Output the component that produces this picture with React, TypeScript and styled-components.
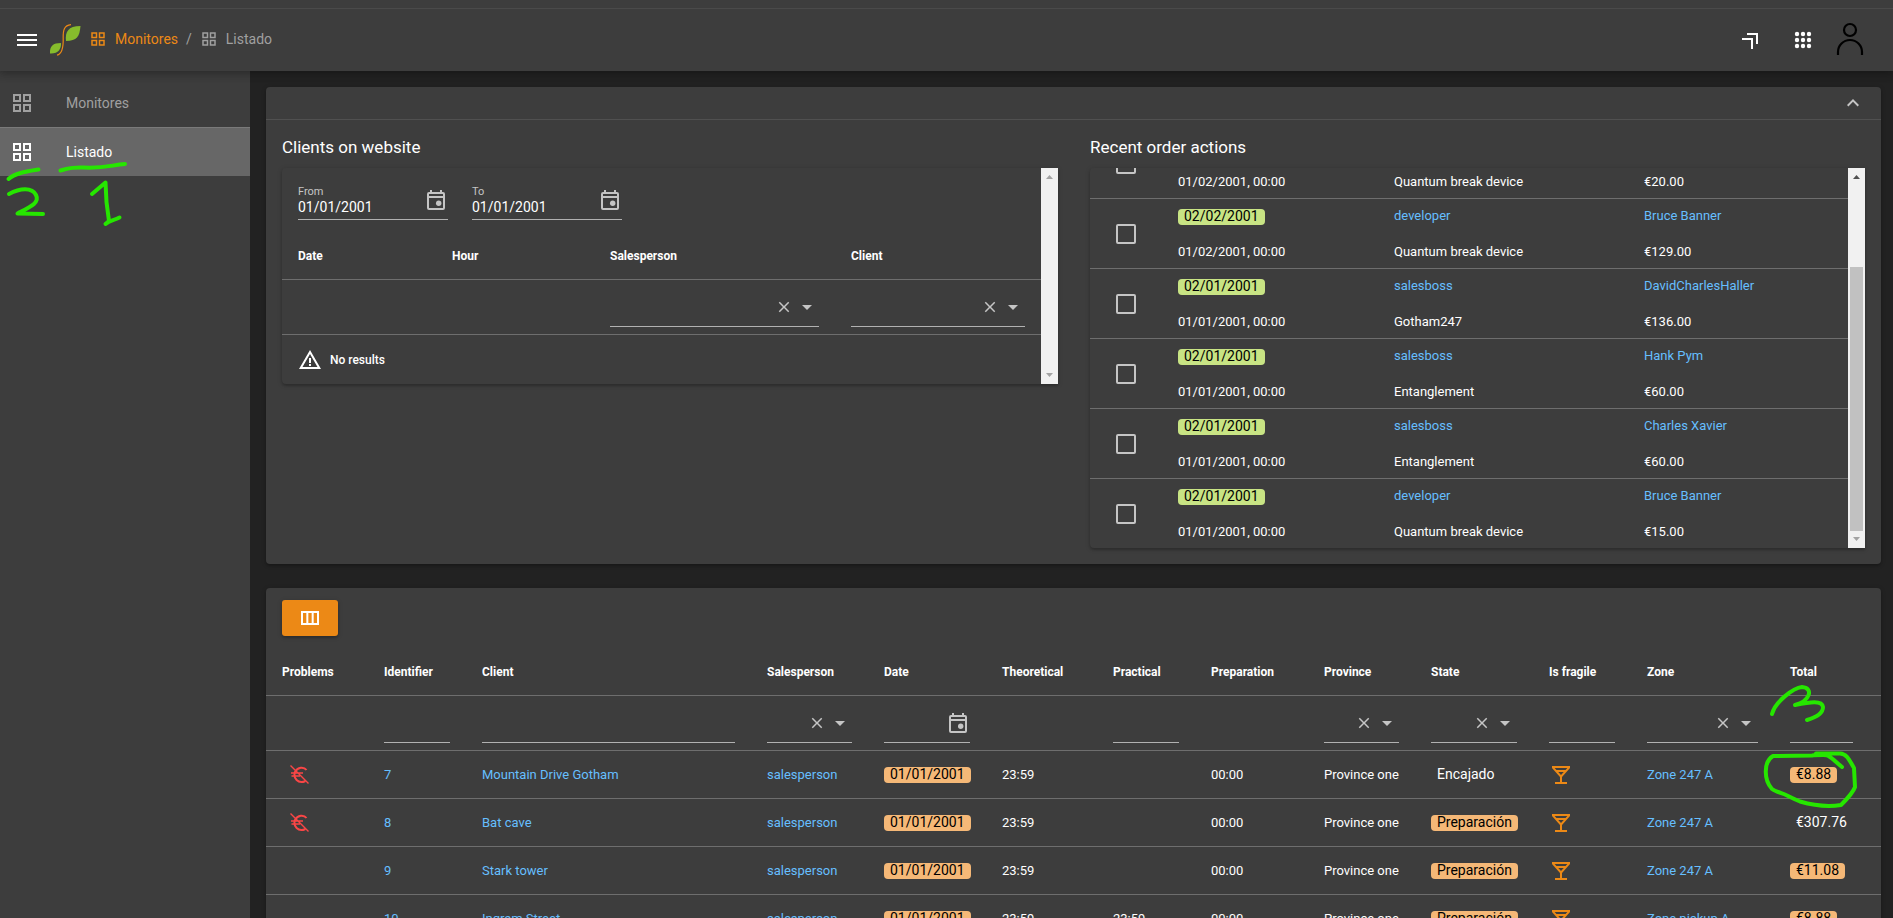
import React from "react";
import styled, { createGlobalStyle } from "styled-components";
import {
  MdArrowDropDown,
  MdClose,
  MdExpandLess,
  MdOutlineGridView,
  MdOutlineLocalBar,
  MdOutlineViewColumn,
  MdWarningAmber,
} from "react-icons/md";

const color = {
  page: "#222222",
  surface: "#3d3d3d",
  active: "#676767",
  line: "#6e6e6e",
  faintLine: "#505050",
  underline: "#b1b1b1",
  text: "#ffffff",
  muted: "#a0a0a0",
  icon: "#c5c5c5",
  link: "#66bfff",
  primary: "#ec8916",
  notice: "#f5b877",
  success: "#c8e484",
  alert: "#fa4646",
  mark: "#26e600",
};

const GlobalStyle = createGlobalStyle`
  *, *::before, *::after { box-sizing: border-box; }
  body {
    margin: 0;
    background: ${color.page};
    color: ${color.text};
    font-family: Roboto, "Liberation Sans", sans-serif;
    font-size: 14px;
    line-height: 20px;
  }
  button, input, select { font: inherit; color: inherit; }
  svg { display: block; flex: none; }
`;

const Shell = styled.div`
  position: relative;
  display: flex;
  flex-direction: column;
  height: 100vh;
  overflow: hidden;
`;

const TopBar = styled.header`
  position: relative;
  z-index: 1;
  flex: none;
  background: ${color.surface};
  padding-top: 8px;
  box-shadow: 0 0 10px 2px rgba(0, 0, 0, 0.2), 0 0 10px rgba(0, 0, 0, 0.24);
`;

const Toolbar = styled.div`
  display: flex;
  align-items: center;
  height: 63px;
  padding: 0 28px 0 16px;
  border-top: 1px solid #4a4a4a;
`;

const IconButton = styled.button`
  display: flex;
  padding: 0;
  border: 0;
  background: none;
  color: ${(p) => p.color || color.text};
  cursor: pointer;
`;

const LogoLink = styled.a`
  margin-left: 12px;
`;

const Breadcrumb = styled.nav`
  display: flex;
  align-items: center;
  margin: 0 0 2px 8px;
  color: ${color.muted};
`;

const Crumb = styled.a<{ $current?: boolean }>`
  display: flex;
  align-items: center;
  gap: 8px;
  color: ${(p) => (p.$current ? color.muted : color.primary)};
  text-decoration: none;
`;

const Separator = styled.span`
  margin: 0 8px;
`;

const Actions = styled.div`
  display: flex;
  align-items: center;
  gap: 20px;
  margin-left: auto;
`;

const Body = styled.div`
  display: flex;
  flex: 1;
  min-height: 0;
`;

const Sidebar = styled.nav`
  flex: none;
  width: 250px;
  padding-top: 7px;
  background: ${color.surface};
`;

const NavItem = styled.a<{ $active?: boolean }>`
  display: flex;
  align-items: center;
  gap: 32px;
  height: 49px;
  padding: 0 10px;
  color: ${(p) => (p.$active ? color.text : color.muted)};
  background: ${(p) => (p.$active ? color.active : "transparent")};
  border-top: 1px solid ${(p) => (p.$active ? "#7a7a7a" : "transparent")};
  text-decoration: none;
`;

const Content = styled.main`
  display: flex;
  flex-direction: column;
  gap: 24px;
  flex: 1;
  min-width: 0;
  padding: 16px 12px 0 16px;
`;

const Card = styled.section`
  flex: none;
  background: ${color.surface};
  border-radius: 4px;
  box-shadow: 0 1px 5px rgba(0, 0, 0, 0.2), 0 2px 2px rgba(0, 0, 0, 0.14);
`;

const CardBar = styled.div`
  display: flex;
  align-items: center;
  justify-content: flex-end;
  height: 33px;
  padding: 0 16px;
  border-bottom: 1px solid ${color.faintLine};
`;

const Columns = styled.div`
  display: grid;
  grid-template-columns: 1fr 1fr;
  align-items: start;
  gap: 32px;
  padding: 16px;
`;

const Heading = styled.h2`
  margin: 0 0 10px;
  font-size: 17px;
  font-weight: 400;
  line-height: 22px;
`;

const Panel = styled.div`
  display: flex;
  border-radius: 4px 0 0 4px;
  overflow: hidden;
  box-shadow: 0 1px 5px rgba(0, 0, 0, 0.2), 0 2px 2px rgba(0, 0, 0, 0.14);
`;

const PanelBody = styled.div<{ $height?: number }>`
  display: flex;
  flex-direction: column;
  justify-content: flex-end;
  flex: 1;
  min-width: 0;
  height: ${(p) => (p.$height ? `${p.$height}px` : "auto")};
`;

const Track = styled.div`
  display: flex;
  flex-direction: column;
  align-items: center;
  justify-content: space-between;
  flex: none;
  width: 17px;
  padding: 7px 0;
  background: #f1f1f1;
`;

const Thumb = styled.div`
  width: 13px;
  height: 264px;
  margin: auto 0 6px;
  background: #c1c1c1;
`;

const Dates = styled.div`
  display: flex;
  gap: 24px;
  padding: 12px 16px;
`;

const Table = styled.table`
  width: 100%;
  table-layout: fixed;
  border-collapse: separate;
  border-spacing: 0;
  font-size: 13px;
`;

const Th = styled.th`
  height: 48px;
  padding: 0 16px;
  border-bottom: 1px solid ${color.line};
  text-align: left;
  font-size: 12px;
  font-weight: 700;
  white-space: nowrap;
`;

const FilterCell = styled.td<{ $inset?: boolean }>`
  height: 55px;
  padding: 7px ${(p) => (p.$inset ? "28px" : "16px")} 7px 16px;
  border-bottom: 1px solid ${color.line};
  vertical-align: top;
`;

const Cell = styled.td`
  height: 48px;
  padding: 0 16px;
  border-bottom: 1px solid ${color.line};
  white-space: nowrap;
`;

const OrderCell = styled.td`
  height: 70px;
  padding: 7px 16px 6px;
  border-bottom: 1px solid ${color.line};
  white-space: nowrap;

  tr:last-child > & {
    height: 69px;
    border-bottom: 0;
  }
`;

const CheckCell = styled(OrderCell)`
  padding-left: 26px;
`;

const Stack = styled.div`
  display: flex;
  flex-direction: column;
  align-items: flex-start;
  gap: 16px;
`;

const Link = styled.a`
  color: ${color.link};
  text-decoration: none;
`;

const Badge = styled.span<{ $fill?: string }>`
  display: inline-block;
  padding: 0 6px 1px;
  border-radius: 4px;
  background: ${(p) => p.$fill || "transparent"};
  color: ${(p) => (p.$fill ? "#000000" : color.text)};
  font-size: 14px;
  line-height: 15px;
  vertical-align: middle;
`;

const StackLine = styled.div<{ $badge?: boolean }>`
  display: flex;
  align-items: ${(p) => (p.$badge ? "flex-end" : "center")};
  height: 20px;
  padding-bottom: ${(p) => (p.$badge ? "1px" : "0")};
`;

const CheckBox = styled.input`
  appearance: none;
  display: block;
  width: 20px;
  height: 20px;
  margin: 0;
  border: 2px solid ${color.icon};
  border-radius: 2px;
`;

const Field = styled.div<{ $wide?: boolean }>`
  position: relative;
  display: flex;
  align-items: center;
  gap: 2px;
  width: ${(p) => (p.$wide ? "150px" : "100%")};
  height: 40px;
  border-bottom: 1px solid ${color.underline};
  color: ${color.icon};
`;

const LabeledBox = styled.label`
  display: flex;
  flex-direction: column;
  flex: 1;
  min-width: 0;
  font-size: 11px;
  line-height: 14px;
`;

const Input = styled.input`
  flex: 1;
  width: 100%;
  min-width: 0;
  height: 16px;
  padding: 0;
  border: 0;
  outline: 0;
  background: transparent;
  color: ${color.text};
  font-size: 14px;
  line-height: 16px;
`;

const Select = styled.select`
  appearance: none;
  flex: 1;
  width: 0;
  min-width: 0;
  height: 100%;
  padding: 0;
  border: 0;
  outline: 0;
  background: transparent;
`;

const Empty = styled.div`
  display: flex;
  align-items: center;
  gap: 8px;
  height: 49px;
  padding: 0 16px;
  font-size: 12px;
  font-weight: 500;
`;

const TableActions = styled.div`
  padding: 12px 16px;
`;

const ColumnsButton = styled.button`
  display: flex;
  align-items: center;
  justify-content: center;
  width: 56px;
  height: 36px;
  padding: 0;
  border: 0;
  border-radius: 3px;
  background: ${color.primary};
  color: ${color.text};
  box-shadow: 0 1px 5px rgba(0, 0, 0, 0.2), 0 2px 2px rgba(0, 0, 0, 0.14);
`;

const DebtIcon = styled.svg`
  margin-left: 8px;
`;

const Marks = styled.svg<{ $side: "left" | "right"; $top: number }>`
  position: absolute;
  z-index: 2;
  top: ${(p) => p.$top}px;
  ${(p) => p.$side}: 0;
  fill: none;
  stroke: ${color.mark};
  stroke-width: 4;
  stroke-linecap: round;
  stroke-linejoin: round;
  pointer-events: none;
`;

const CalendarIcon = () => (
  <svg width="24" height="24" viewBox="0 0 24 24" fill="currentColor">
    <path d="M19 4h-1V2h-2v2H8V2H6v2H5a2 2 0 0 0-2 2v14a2 2 0 0 0 2 2h14a2 2 0 0 0 2-2V6a2 2 0 0 0-2-2zm0 16H5V10h14zm0-12H5V6h14z" />
    <circle cx="14.7" cy="15.3" r="2.7" />
  </svg>
);

const ScrollArrow = ({ down, dim }: { down?: boolean; dim?: boolean }) => (
  <svg width="7" height="4" viewBox="0 0 7 4" fill={dim ? "#a3a3a3" : "#505050"}>
    <path d={down ? "M0 0h7L3.5 4z" : "M0 4h7L3.5 0z"} />
  </svg>
);

const Logo = () => (
  <svg width="32" height="32" viewBox="0 0 32 32">
    <path d="M31.5 2C30.5 13 28 16.500 17 17C16 8 19 2 31.500 2z" fill="#86bc2c" />
    <path d="M1 29.500C.5 22 4 19 12 19C12.500 25 9 30 1 29.500z" fill="#86bc2c" />
    <path
      d="M22 .7C15 1.500 14 6 14.200 14C14.400 22 13.500 30 8 31.200"
      fill="none"
      stroke="#ec8916"
      strokeWidth="1.200"
    />
  </svg>
);

const MenuIcon = () => (
  <svg width="21" height="24" viewBox="0 0 21 24" fill="currentColor">
    <path d="M1 6h20v2H1zM1 11h20v2H1zM1 16h20v2H1z" />
  </svg>
);

const PinIcon = () => (
  <svg width="32" height="24" viewBox="0 0 32 24" fill="none" stroke="currentColor" strokeWidth="2">
    <path d="M8 6h10v10M3 11h10v10" />
  </svg>
);

const AppsIcon = () => (
  <svg width="24" height="24" viewBox="0 0 24 24" fill="currentColor">
    {[6, 12, 18].map((y) => [6, 12, 18].map((x) => <circle key={`${x}-${y}`} cx={x} cy={y} r="2.200" />))}
  </svg>
);

const UserIcon = () => (
  <svg width="30" height="36" viewBox="0 0 30 36" fill="none" stroke="#000000" strokeWidth="2.200">
    <circle cx="15" cy="8" r="6" />
    <path d="M3 33v-3a12 12 0 0 1 24 0v3" />
  </svg>
);

const SelectFilter = ({ label }: { label: string }) => (
  <Field>
    <Select aria-label={label} defaultValue="">
      <option value="" />
    </Select>
    <IconButton type="button" color={color.icon} aria-label={`Clear ${label}`}>
      <MdClose size={18} />
    </IconButton>
    <MdArrowDropDown size={24} />
  </Field>
);

const TextFilter = ({ label, date }: { label: string; date?: boolean }) => (
  <Field>
    <Input aria-label={label} />
    {date && <CalendarIcon />}
  </Field>
);

const DateField = ({ label, value }: { label: string; value: string }) => (
  <Field $wide>
    <LabeledBox>
      {label}
      <Input defaultValue={value} />
    </LabeledBox>
    <CalendarIcon />
  </Field>
);

type Filter = "none" | "text" | "inset" | "select" | "date";

const visitColumns: [string, number, Filter][] = [
  ["Date", 154, "none"],
  ["Hour", 158, "none"],
  ["Salesperson", 241, "select"],
  ["Client", 206, "select"],
];

const ticketColumns: [string, number, Filter][] = [
  ["Problems", 102, "none"],
  ["Identifier", 98, "text"],
  ["Client", 285, "text"],
  ["Salesperson", 117, "select"],
  ["Date", 118, "date"],
  ["Theoretical", 111, "none"],
  ["Practical", 98, "text"],
  ["Preparation", 113, "none"],
  ["Province", 107, "select"],
  ["State", 118, "select"],
  ["Is fragile", 98, "text"],
  ["Zone", 143, "select"],
  ["Total", 107, "inset"],
];

const orderColumns = [72, 216, 250, 220];

const orders = [
  ["", "01/02/2001, 00:00", "", "Quantum break device", "", "€20.00"],
  ["02/02/2001", "01/02/2001, 00:00", "developer", "Quantum break device", "Bruce Banner", "€129.00"],
  ["02/01/2001", "01/01/2001, 00:00", "salesboss", "Gotham247", "DavidCharlesHaller", "€136.00"],
  ["02/01/2001", "01/01/2001, 00:00", "salesboss", "Entanglement", "Hank Pym", "€60.00"],
  ["02/01/2001", "01/01/2001, 00:00", "salesboss", "Entanglement", "Charles Xavier", "€60.00"],
  ["02/01/2001", "01/01/2001, 00:00", "developer", "Quantum break device", "Bruce Banner", "€15.00"],
];

const tickets = [
  { debt: true, id: 7, client: "Mountain Drive Gotham", practical: "", state: "Encajado", zone: "Zone 247 A", total: "€8.88", low: true },
  { debt: true, id: 8, client: "Bat cave", practical: "", state: "Preparación", zone: "Zone 247 A", total: "€307.76", low: false },
  { debt: false, id: 9, client: "Stark tower", practical: "", state: "Preparación", zone: "Zone 247 A", total: "€11.08", low: true },
  { debt: false, id: 10, client: "Ingram Street", practical: "23:59", state: "Preparación", zone: "Zone pickup A", total: "€8.88", low: true },
];

const TableHead = ({ columns }: { columns: [string, number, Filter][] }) => (
  <>
    <colgroup>
      {columns.map(([name, width]) => (
        <col key={name} width={width} />
      ))}
    </colgroup>
    <thead>
      <tr>
        {columns.map(([name]) => (
          <Th key={name} scope="col">
            {name}
          </Th>
        ))}
      </tr>
      <tr>
        {columns.map(([name, , filter]) => (
          <FilterCell key={name} $inset={filter === "inset"}>
            {filter === "select" && <SelectFilter label={name} />}
            {(filter === "text" || filter === "inset") && <TextFilter label={name} />}
            {filter === "date" && <TextFilter label={name} date />}
          </FilterCell>
        ))}
      </tr>
    </thead>
  </>
);

const Visits = () => (
  <div>
    <Heading>Clients on website</Heading>
    <Panel>
      <PanelBody>
        <Dates>
          <DateField label="From" value="01/01/2001" />
          <DateField label="To" value="01/01/2001" />
        </Dates>
        <Table>
          <TableHead columns={visitColumns} />
        </Table>
        <Empty>
          <MdWarningAmber size={24} />
          No results
        </Empty>
      </PanelBody>
      <Track>
        <ScrollArrow dim />
        <ScrollArrow down dim />
      </Track>
    </Panel>
  </div>
);

const Orders = () => (
  <div>
    <Heading>Recent order actions</Heading>
    <Panel>
      <PanelBody $height={380}>
        <Table>
          <colgroup>
            {orderColumns.map((width, i) => (
              <col key={i} width={width} />
            ))}
          </colgroup>
          <tbody>
            {orders.map(([shipped, created, agent, nickname, client, amount], i) => (
              <tr key={i}>
                <CheckCell>
                  <CheckBox type="checkbox" aria-label={`Select order of ${amount}`} />
                </CheckCell>
                <OrderCell>
                  <Stack>
                    <StackLine $badge>{shipped && <Badge $fill={color.success}>{shipped}</Badge>}</StackLine>
                    <span>{created}</span>
                  </Stack>
                </OrderCell>
                <OrderCell>
                  <Stack>
                    <StackLine>{agent && <Link href="#">{agent}</Link>}</StackLine>
                    <span>{nickname}</span>
                  </Stack>
                </OrderCell>
                <OrderCell>
                  <Stack>
                    <StackLine>{client && <Link href="#">{client}</Link>}</StackLine>
                    <span>{amount}</span>
                  </Stack>
                </OrderCell>
              </tr>
            ))}
          </tbody>
        </Table>
      </PanelBody>
      <Track>
        <ScrollArrow />
        <Thumb />
        <ScrollArrow down dim />
      </Track>
    </Panel>
  </div>
);

const Tickets = () => (
  <Card>
    <TableActions>
      <ColumnsButton type="button" aria-label="Columns">
        <MdOutlineViewColumn size={24} />
      </ColumnsButton>
    </TableActions>
    <Table>
      <TableHead columns={ticketColumns} />
      <tbody>
        {tickets.map((t) => (
          <tr key={t.id}>
            <Cell>
              {t.debt && (
                <DebtIcon width="19" height="19" viewBox="0 0 19 19" fill="none" stroke={color.alert} strokeWidth="1.400">
                  <path d="M.5.5l18 18M1 8h12M1.500 11H10" />
                  <path d="M16.500 5C14 1.500 7.500 1.800 5 7C2.800 13 8 19.500 15.500 16" strokeWidth="2" />
                </DebtIcon>
              )}
            </Cell>
            <Cell>
              <Link href="#">{t.id}</Link>
            </Cell>
            <Cell>
              <Link href="#">{t.client}</Link>
            </Cell>
            <Cell>
              <Link href="#">salesperson</Link>
            </Cell>
            <Cell>
              <Badge $fill={color.notice}>01/01/2001</Badge>
            </Cell>
            <Cell>23:59</Cell>
            <Cell>{t.practical}</Cell>
            <Cell>00:00</Cell>
            <Cell>Province one</Cell>
            <Cell>
              <Badge $fill={t.state === "Encajado" ? undefined : color.notice}>{t.state}</Badge>
            </Cell>
            <Cell>
              <MdOutlineLocalBar size={24} color={color.primary} />
            </Cell>
            <Cell>
              <Link href="#">{t.zone}</Link>
            </Cell>
            <Cell>
              <Badge $fill={t.low ? color.notice : undefined}>{t.total}</Badge>
            </Cell>
          </tr>
        ))}
      </tbody>
    </Table>
  </Card>
);

export default function App() {
  return (
    <Shell>
      <GlobalStyle />
      <TopBar>
        <Toolbar>
          <IconButton type="button" aria-label="Menu">
            <MenuIcon />
          </IconButton>
          <LogoLink href="#" aria-label="Home">
            <Logo />
          </LogoLink>
          <Breadcrumb aria-label="Breadcrumb">
            <Crumb href="#">
              <MdOutlineGridView size={18} />
              Monitores
            </Crumb>
            <Separator>/</Separator>
            <Crumb href="#" $current>
              <MdOutlineGridView size={18} />
              Listado
            </Crumb>
          </Breadcrumb>
          <Actions>
            <IconButton type="button" aria-label="Pinned modules">
              <PinIcon />
            </IconButton>
            <IconButton type="button" aria-label="Modules">
              <AppsIcon />
            </IconButton>
            <IconButton type="button" aria-label="User">
              <UserIcon />
            </IconButton>
          </Actions>
        </Toolbar>
      </TopBar>
      <Body>
        <Sidebar aria-label="Sections">
          <NavItem href="#">
            <MdOutlineGridView size={24} />
            Monitores
          </NavItem>
          <NavItem href="#" $active>
            <MdOutlineGridView size={24} />
            Listado
          </NavItem>
        </Sidebar>
        <Content>
          <Card>
            <CardBar>
              <IconButton type="button" color={color.icon} aria-label="Collapse">
                <MdExpandLess size={24} />
              </IconButton>
            </CardBar>
            <Columns>
              <Visits />
              <Orders />
            </Columns>
          </Card>
          <Tickets />
        </Content>
      </Body>
      <Marks $side="left" $top={160} width="140" height="70" viewBox="0 160 140 70" aria-hidden="true">
        <path d="M8.500 179C15 173 26 171.500 38.500 169.500" />
        <path d="M60.500 170.500C70 168.500 68 167 84 167.500C104 168.500 112 165 125 164" />
        <path d="M9 194C20 188 32 187 36 195C40 203 30 207 17.500 213.500L43 214" />
        <path d="M92 194L105.500 182.500L106.500 202L109 221L105.500 224C109 220.500 114 220.500 119.500 217.500" />
      </Marks>
      <Marks $side="right" $top={680} width="153" height="140" viewBox="1740 680 153 140" aria-hidden="true">
        <path d="M1772 714C1775 702 1793 688 1802 687C1814 688 1810 701 1795 705C1810 702 1822 700 1823 707C1823 714 1814 718 1807 720" />
        <path d="M1816 753.500L1840 753.500C1848 754 1850 762 1854 768L1855 787C1853 793 1844 802 1841 805C1828 807 1812 805 1800 801.500C1794 799 1790 797 1787 795.500C1782 793 1776 792 1772 789C1764 780 1763 762 1773 756L1812 755.500C1832 754 1826 754 1842 767" />
      </Marks>
    </Shell>
  );
}
